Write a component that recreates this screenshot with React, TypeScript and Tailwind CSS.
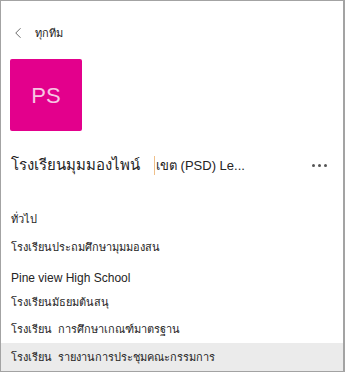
import { ChevronLeft } from "lucide-react";

const channels = [
  { name: "โรงเรียนประถมศึกษามุมมองสน", cls: "mt-[8px] h-[24px]" },
  { name: "Pine view High School", cls: "mt-[7px] h-[24px] text-[12px]" },
  { name: "โรงเรียนมัธยมต้นสนุ", cls: "h-[24px]" },
  { name: "โรงเรียน  การศึกษาเกณฑ์มาตรฐาน", cls: "mt-[1px] h-[28px]" },
  { name: "โรงเรียน  รายงานการประชุมคณะกรรมการ", cls: "h-[29px] bg-[#ebebeb]" },
];

export default function App() {
  return (
    <div
      className="h-[372px] w-[345px] overflow-hidden border border-r-2 border-[#a3a3a3] bg-white text-[#252424]"
      style={{ fontFamily: '"Liberation Sans", "Noto Sans", sans-serif' }}
    >
      <div className="flex h-[30px] items-center gap-[8px] pl-[8px] pt-[32px] text-[11px]">
        <ChevronLeft className="h-[18px] w-[18px] text-[#616161]" strokeWidth={1.25} />
        <span>ทุกทีม</span>
      </div>
      <div className="ml-[9px] mt-[26px] flex h-[72px] w-[72px] items-center justify-center rounded-[2px] bg-[#e3008c] text-[22px] text-[#f7c5e3]">
        PS
      </div>
      <div className="mt-[23px] flex items-center pl-[10px] pr-[16px]">
        <span className="w-[143px] whitespace-nowrap text-[15px]">โรงเรียนมุมมองไพน์</span>
        <span className="border-l border-[#f0c08a] pl-[1px] text-[13px]">เขต (PSD) Le...</span>
        <span className="ml-auto flex gap-[3px]">
          <span className="h-[3px] w-[3px] rounded-full bg-[#555]" />
          <span className="h-[3px] w-[3px] rounded-full bg-[#555]" />
          <span className="h-[3px] w-[3px] rounded-full bg-[#555]" />
        </span>
      </div>
      <div className="mt-[34px] pl-[10px] text-[11px]">ทั่วไป</div>
      <ul className="flex flex-col text-[11px]">
        {channels.map((c) => (
          <li key={c.name} className={`flex items-center whitespace-pre pl-[10px] ${c.cls}`}>
            {c.name}
          </li>
        ))}
      </ul>
    </div>
  );
}
